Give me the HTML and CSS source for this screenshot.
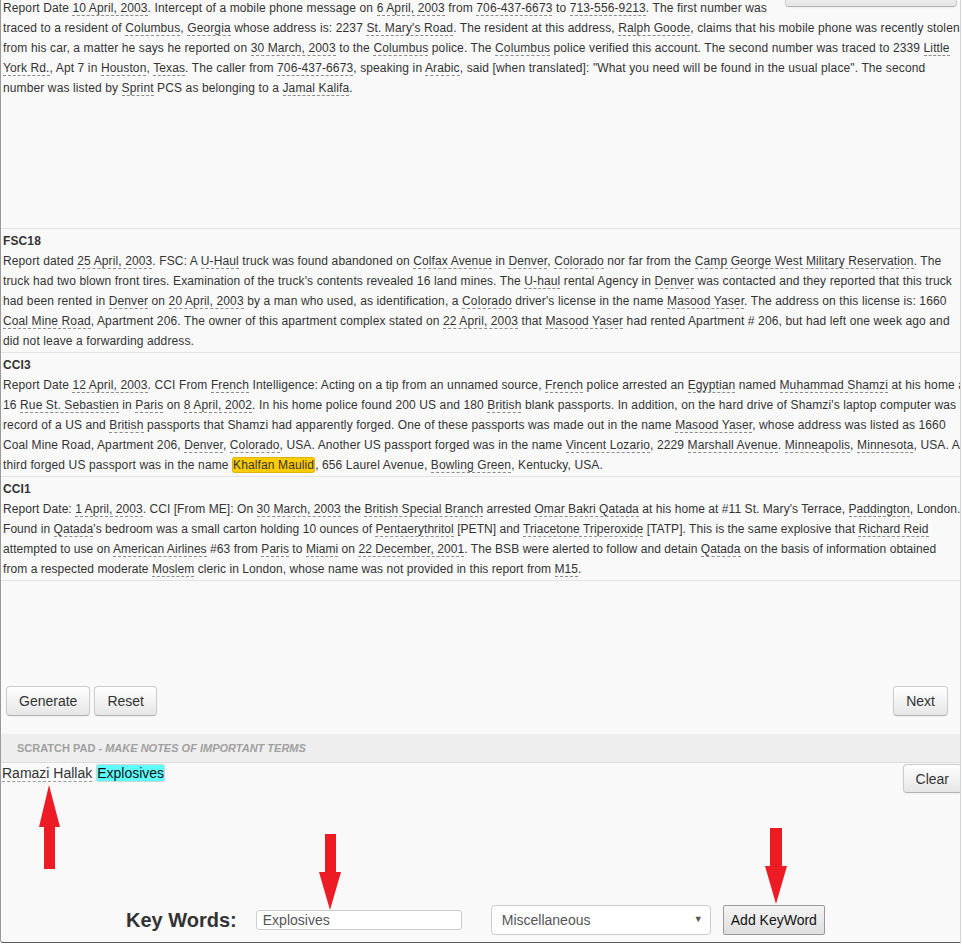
FILE: index.html
```html
<!DOCTYPE html>
<html lang="en">
<head>
<meta charset="utf-8">
<title>Reports</title>
<link rel="stylesheet" href="styles.css">
</head>
<body>
<div class="panel">
  <div class="reports">
    <div class="report report-first">
      <button class="btn btn-top" type="button">Hide</button>
      <p class="body">Report Date <span class="t">10 April, 2003</span>. Intercept of a mobile phone message on <span class="t">6 April, 2003</span> from <span class="t">706-437-6673</span> to <span class="t">713-556-9213</span>. The first number was traced to a resident of <span class="t">Columbus</span>, <span class="t">Georgia</span> whose address is: 2237 <span class="t">St. Mary's Road</span>. The resident at this address, <span class="t">Ralph Goode</span>, claims that his mobile phone was recently stolen from his car, a matter he says he reported on <span class="t">30 March, 2003</span> to the <span class="t">Columbus</span> police. The <span class="t">Columbus</span> police verified this account. The second number was traced to 2339 <span class="t">Little York Rd.</span>, Apt 7 in <span class="t">Houston</span>, <span class="t">Texas</span>. The caller from <span class="t">706-437-6673</span>, speaking in <span class="t">Arabic</span>, said [when translated]: "What you need will be found in the usual place". The second number was listed by <span class="t">Sprint</span> PCS as belonging to a <span class="t">Jamal Kalifa</span>.</p>
    </div>
    <div class="report">
      <h3 class="title">FSC18</h3>
      <p class="body">Report dated <span class="t">25 April, 2003</span>. FSC: A <span class="t">U-Haul</span> truck was found abandoned on <span class="t">Colfax Avenue</span> in <span class="t">Denver</span>, <span class="t">Colorado</span> nor far from the <span class="t">Camp George West Military Reservation</span>. The truck had two blown front tires. Examination of the truck's contents revealed 16 land mines. The <span class="t">U-haul</span> rental Agency in <span class="t">Denver</span> was contacted and they reported that this truck had been rented in <span class="t">Denver</span> on <span class="t">20 April, 2003</span> by a man who used, as identification, a <span class="t">Colorado</span> driver's license in the name <span class="t">Masood Yaser</span>. The address on this license is: 1660 <span class="t">Coal Mine Road</span>, Apartment 206. The owner of this apartment complex stated on <span class="t">22 April, 2003</span> that <span class="t">Masood Yaser</span> had rented Apartment # 206, but had left one week ago and did not leave a forwarding address.</p>
    </div>
    <div class="report">
      <h3 class="title">CCI3</h3>
      <p class="body">Report Date <span class="t">12 April, 2003</span>. CCI From <span class="t">French</span> Intelligence: Acting on a tip from an unnamed source, <span class="t">French</span> police arrested an <span class="t">Egyptian</span> named <span class="t">Muhammad Shamzi</span> at his home at 16 <span class="t">Rue St. Sebastien</span> in <span class="t">Paris</span> on <span class="t">8 April, 2002</span>. In his home police found 200 US and 180 <span class="t">British</span> blank passports. In addition, on the hard drive of Shamzi's laptop computer was a record of a US and <span class="t">British</span> passports that Shamzi had apparently forged. One of these passports was made out in the name <span class="t">Masood Yaser</span>, whose address was listed as 1660 Coal Mine Road, Apartment 206, <span class="t">Denver</span>, <span class="t">Colorado</span>, USA. Another US passport forged was in the name <span class="t">Vincent Lozario</span>, 2229 <span class="t">Marshall Avenue</span>. <span class="t">Minneapolis</span>, <span class="t">Minnesota</span>, USA. A third forged US passport was in the name <span class="hl-gold">Khalfan Maulid</span>, 656 Laurel Avenue, <span class="t">Bowling Green</span>, Kentucky, USA.</p>
    </div>
    <div class="report">
      <h3 class="title">CCI1</h3>
      <p class="body body-set">Report Date: <span class="t">1 April, 2003</span>. CCI [From ME]: On <span class="t">30 March, 2003</span> the <span class="t">British Special Branch</span> arrested <span class="t">Omar Bakri Qatada</span> at his home at #11 St. Mary's Terrace, <span class="t">Paddington</span>, London.<br>Found in <span class="t">Qatada</span>'s bedroom was a small carton holding 10 ounces of <span class="t">Pentaerythritol</span> [PETN] and <span class="t">Triacetone Triperoxide</span> [TATP]. This is the same explosive that <span class="t">Richard Reid</span><br>attempted to use on <span class="t">American Airlines</span> #63 from <span class="t">Paris</span> to <span class="t">Miami</span> on <span class="t">22 December, 2001</span>. The BSB were alerted to follow and detain <span class="t">Qatada</span> on the basis of information obtained<br>from a respected moderate <span class="t">Moslem</span> cleric in London, whose name was not provided in this report from <span class="t">M15</span>.</p>
    </div>
  </div>

  <div class="actions">
    <button class="btn" type="button">Generate</button>
    <button class="btn" type="button">Reset</button>
    <span class="spacer"></span>
    <button class="btn" type="button">Next</button>
  </div>

  <div class="scratch-head">Scratch Pad - <em>Make notes of important terms</em></div>

  <div class="scratch">
    <div class="scratch-top">
      <div class="terms"><span class="t t-name">Ramazi Hallak</span> <span class="hl-cyan">Explosives</span></div>
      <button class="btn btn-clear" type="button">Clear</button>
    </div>
    <div class="keywords">
      <label class="kw-label" for="kw">Key Words:</label>
      <input class="kw-input" id="kw" type="text" value="Explosives">
      <span class="kw-select-wrap">
        <select class="kw-select"><option>Miscellaneous</option></select>
      </span>
      <button class="kw-add" type="button">Add KeyWord</button>
    </div>
  </div>

  <svg class="annotations" width="962" height="944" viewBox="0 0 962 944" aria-hidden="true">
    <polygon fill="#ed1c24" points="49,785 60,827 55,827 55,869 44,869 44,827 39,827"/>
    <polygon fill="#ed1c24" points="325,834 336,834 336,872 341,872 330,910 319,872 325,872"/>
    <polygon fill="#ed1c24" points="770,828 782,828 782,866 787,866 776,904 765,866 770,866"/>
  </svg>
</div>
</body>
</html>
```

FILE: styles.css
```css
* { box-sizing: border-box; }

html, body {
  margin: 0;
  padding: 0;
  background: #ffffff;
}

body {
  font-family: "Liberation Sans", Arial, sans-serif;
  color: #333333;
}

.panel {
  position: relative;
  width: 961px;
  height: 943px;
  background: #f9f9f9;
  border-left: 1px solid #9a9a9a;
  border-right: 1px solid #d4d4d4;
  border-bottom: 1px solid #5a5a5a;
  border-bottom-left-radius: 3px;
  display: flex;
  flex-direction: column;
  overflow: hidden;
}

.btn {
  font-family: "Liberation Sans", Arial, sans-serif;
  font-size: 14px;
  line-height: 20px;
  color: #333333;
  padding: 4px 12px;
  height: 30px;
  background: linear-gradient(#ffffff, #e6e6e6);
  border: 1px solid #cccccc;
  border-bottom-color: #b3b3b3;
  border-radius: 4px;
  box-shadow: inset 0 1px 0 rgba(255,255,255,0.2), 0 1px 2px rgba(0,0,0,0.05);
}

.btn-top {
  float: right;
  width: 172px;
  margin: -21px 12px 0 0;
  color: transparent;
}

.reports {
  height: 680px;
  margin-top: -4px;
  width: 971px;
  font-size: 12px;
  line-height: 20px;
  letter-spacing: 0.12px;
  overflow: hidden;
}

.report {
  padding: 2px 3px 1px 2px;
  border-bottom: 1px solid #e4e4e4;
}

.report-first {
  height: 233px;
}

.title {
  margin: 0;
  font-size: 12px;
  line-height: 20px;
  font-weight: bold;
}

.body {
  margin: 0;
}

.body-set {
  white-space: nowrap;
  letter-spacing: 0.06px;
}

.t {
  border-bottom: 1px dashed #8c8c8c;
}

.hl-gold {
  background: #ffcc00;
  border: 1px solid #e0b400;
  border-radius: 3px;
}

.actions {
  display: flex;
  gap: 4px;
  padding: 10px 12px 18px 5px;
}

.spacer { flex: 1; }

.scratch-head {
  height: 29px;
  line-height: 28px;
  padding-left: 16px;
  background: #eeeeee;
  border-bottom: 1px solid #dddddd;
  font-size: 11px;
  font-weight: bold;
  text-transform: uppercase;
  color: #a0a0a0;
}

.scratch-head em { font-style: italic; }

.scratch {
  flex: 1;
  display: flex;
  flex-direction: column;
}

.scratch-top {
  display: flex;
  justify-content: space-between;
  align-items: flex-start;
}

.terms {
  font-size: 14px;
  line-height: 17px;
  padding: 2px 0 0 1px;
}

.t-name { border-bottom-color: #999999; }

.hl-cyan {
  background: #5effff;
  border: 1px solid #c8d8d8;
  border-radius: 3px;
  color: #111111;
}

.btn-clear {
  height: 29px;
  margin-top: 1px;
  margin-right: -2px;
}

.keywords {
  margin-top: auto;
  display: flex;
  align-items: center;
  height: 30px;
  margin-bottom: 7px;
  padding-left: 125px;
}

.kw-label {
  font-size: 20px;
  font-weight: bold;
  color: #333333;
  margin-right: 19px;
}

.kw-input {
  width: 206px;
  height: 20px;
  padding: 0 6px;
  border: 1px solid #cccccc;
  border-radius: 3px;
  background: #ffffff;
  font-family: "Liberation Sans", Arial, sans-serif;
  font-size: 14px;
  color: #555555;
  margin-right: 29px;
}

.kw-select-wrap {
  position: relative;
  display: inline-block;
  margin-right: 12px;
}

.kw-select-wrap::after {
  content: "\25BC";
  position: absolute;
  right: 8px;
  top: 9px;
  font-size: 9px;
  color: #555555;
  pointer-events: none;
}

.kw-select {
  appearance: none;
  -webkit-appearance: none;
  width: 220px;
  height: 30px;
  padding: 0 10px;
  border: 1px solid #cccccc;
  border-radius: 4px;
  background: #ffffff;
  font-family: "Liberation Sans", Arial, sans-serif;
  font-size: 14px;
  color: #555555;
}

.kw-add {
  height: 30px;
  padding: 0 7px;
  font-family: "Liberation Sans", Arial, sans-serif;
  font-size: 14px;
  color: #111111;
  background: linear-gradient(#f4f4f4, #dedede);
  border: 1px solid #9a9a9a;
  border-radius: 2px;
}

.annotations {
  position: absolute;
  left: -1px;
  top: 0;
  pointer-events: none;
  z-index: 3;
}
```
